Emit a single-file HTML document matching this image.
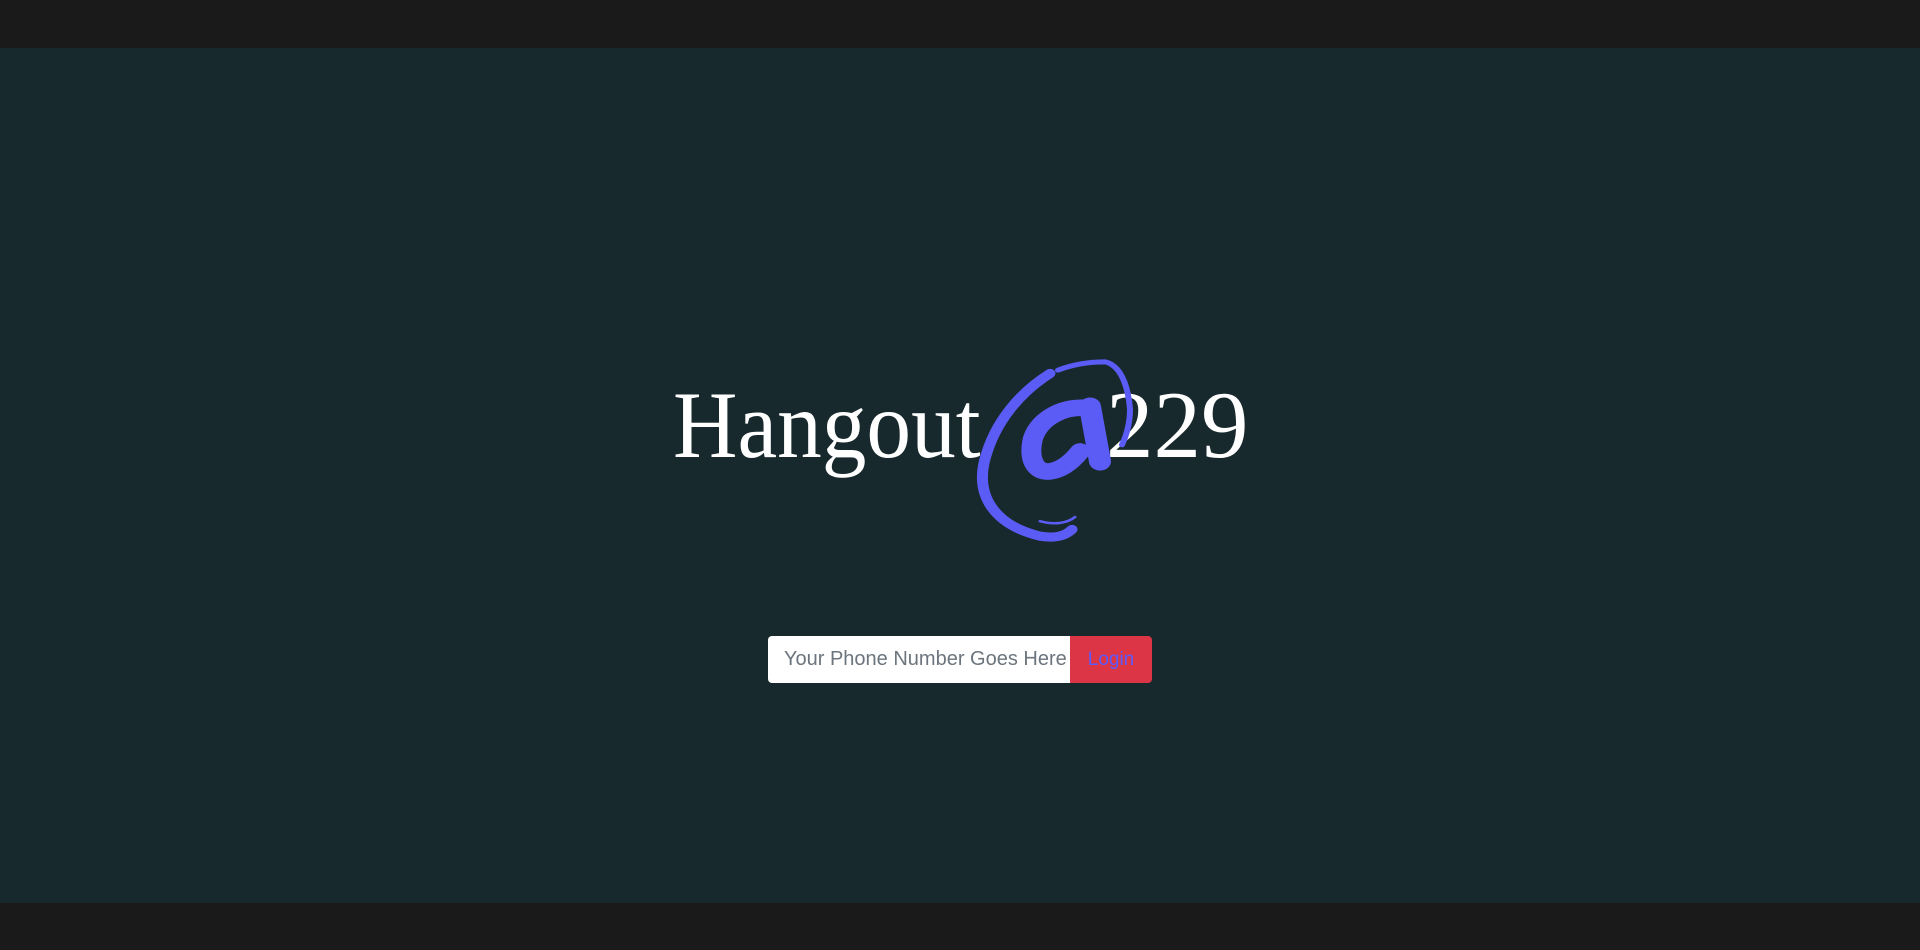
<!DOCTYPE html>
<html><head><style>
html,body{margin:0;padding:0;width:1920px;height:950px;overflow:hidden;background:#18292d;}
.top{position:absolute;left:0;top:0;width:1920px;height:48px;background:#1a1a1a;}
.bot{position:absolute;left:0;top:903px;width:1920px;height:47px;background:#1a1a1a;}
.t{position:absolute;font-family:"Liberation Serif",serif;color:#fff;font-size:95px;line-height:1;white-space:nowrap;transform-origin:0 0;}
.inp{position:absolute;left:768px;top:636px;width:302px;height:47px;background:#fff;border-radius:4px 0 0 4px;box-sizing:border-box;font-family:"Liberation Sans",sans-serif;font-size:20px;color:#6c757d;line-height:47px;padding-left:16px;overflow:hidden;white-space:nowrap;}
.btn{position:absolute;left:1070px;top:636px;width:82px;height:47px;background:#dc3545;border-radius:0 4px 4px 0;font-family:"Liberation Sans",sans-serif;font-size:19px;color:#5a5cff;line-height:47px;text-align:center;}
</style></head><body>
<div class="top"></div>
<div class="t" style="left:673px;top:378px;transform:scaleX(0.94);">Hangout</div>
<div class="t" style="left:1106px;top:378px;">229</div>
<svg style="position:absolute;left:0;top:0" width="1920" height="950">
<g transform="translate(0,361) scale(1,0.83) translate(0,-367)" fill="none" stroke="#5b5cf5" stroke-linecap="round" stroke-linejoin="round">
<path d="M1050 382 C1020 405 995 440 985 485 C975 530 995 565 1040 578 C1055 581 1065 578 1072 570" stroke-width="11"/>
<path d="M1058 378 C1075 370 1092 368 1105 368 C1120 372 1128 395 1130 425 C1130 440 1127 455 1122 468" stroke-width="6"/>
<path d="M1089 424 C1065 420 1040 435 1033 460 C1028 485 1035 502 1050 500 C1062 498 1072 488 1080 476" stroke-width="20"/>
<path d="M1090 422 L1100 488" stroke-width="22"/>
<path d="M1040 560 C1055 565 1068 562 1075 555" stroke-width="3"/>
</g>
</svg>
<div class="inp">Your Phone Number Goes Here</div>
<div class="btn">Login</div>
<div class="bot"></div>
</body></html>
